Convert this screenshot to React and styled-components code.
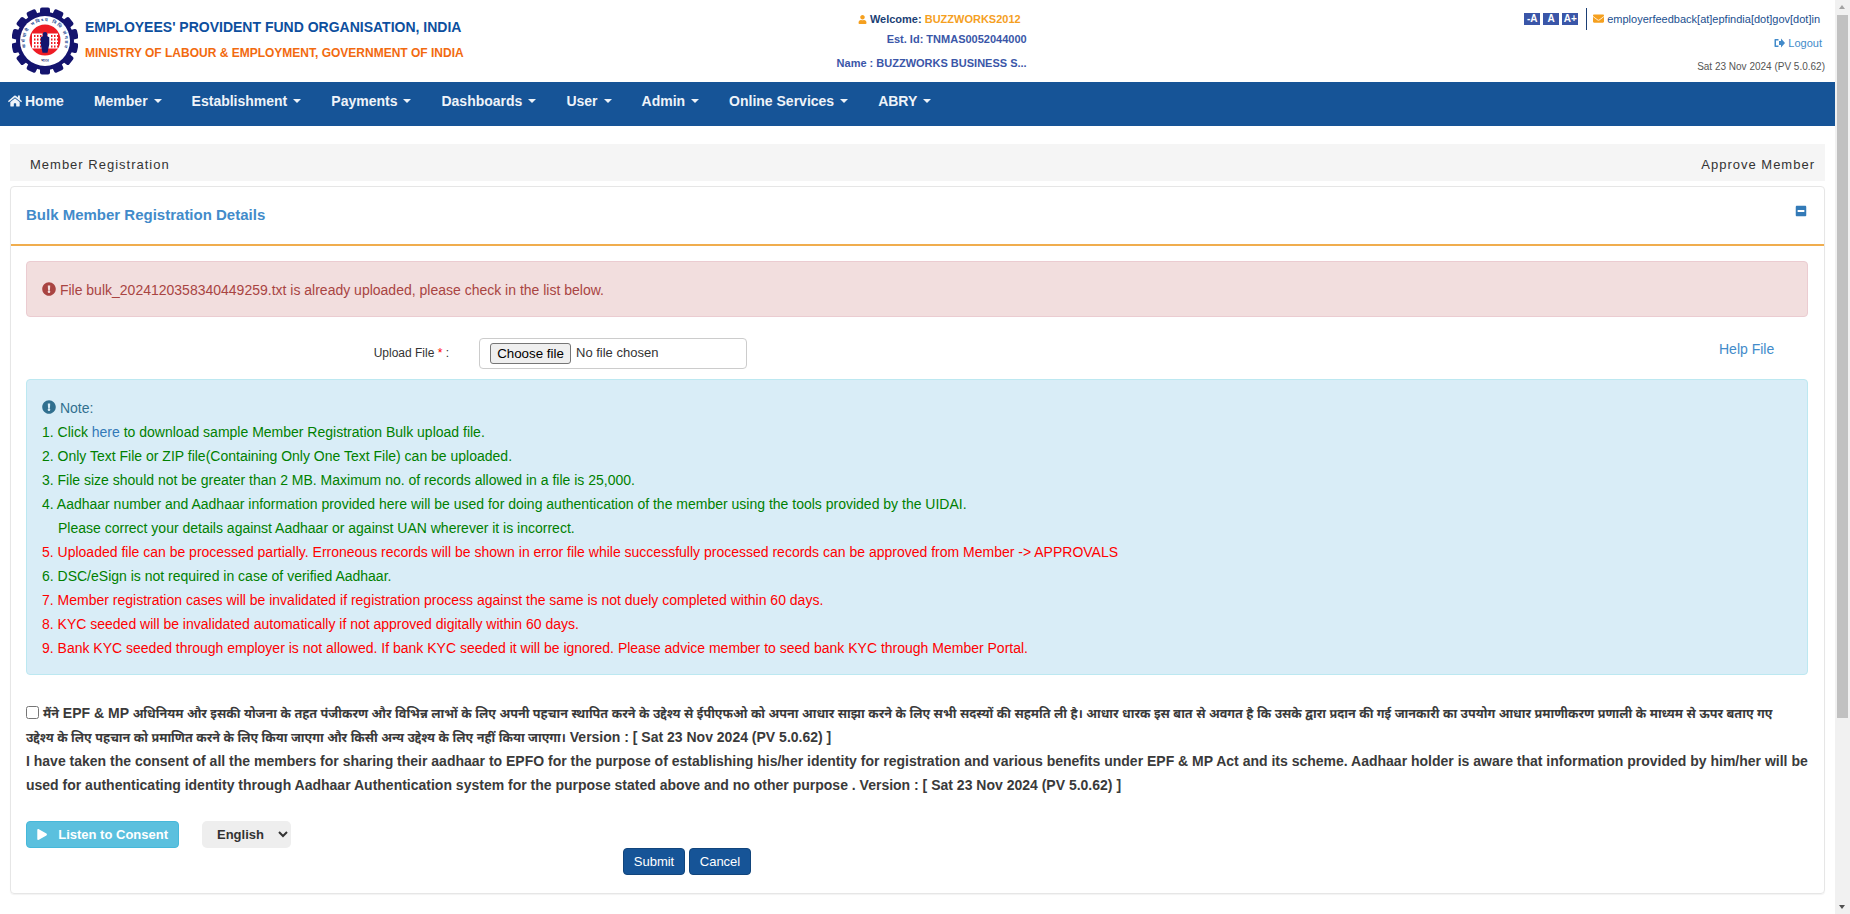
import React from 'react'
import styled, { createGlobalStyle } from 'styled-components'
import { FaHome, FaUser, FaEnvelope, FaExclamationCircle, FaMinusSquare, FaPlay } from 'react-icons/fa'

const GlobalStyle = createGlobalStyle`
  body {
    margin: 0;
    background: #fff;
    color: #333;
    font-family: "Liberation Sans", Arial, "Noto Sans Devanagari", "Noto Sans", sans-serif;
    font-size: 14px;
    line-height: 24px;
  }
  * { box-sizing: border-box; }
`

const Page = styled.div`
  min-height: 1149px;
  padding-right: 15px;
`

const ScrollTrack = styled.div`
  position: fixed;
  top: 0;
  right: 0;
  width: 15px;
  height: 914px;
  background: #f1f1f1;
`

const ScrollThumb = styled.div`
  position: absolute;
  top: 15px;
  left: 2px;
  width: 11px;
  height: 703px;
  background: #c1c1c1;
`

const ScrollArrow = styled.span`
  position: absolute;
  left: 4px;
  ${({ $down }) => ($down ? 'bottom: 5px;' : 'top: 5px;')}
  border-left: 3.5px solid transparent;
  border-right: 3.5px solid transparent;
  ${({ $down }) => ($down ? 'border-top: 4px solid #505050;' : 'border-bottom: 4px solid #a3a3a3;')}
`

const TopBar = styled.header`
  height: 82px;
  display: grid;
  grid-template-columns: 1fr 1fr 1fr;
`

const Brand = styled.div`
  display: flex;
  align-items: center;
  padding-left: 12px;
  gap: 7px;
`

const BrandText = styled.div`
  display: flex;
  flex-direction: column;
  gap: 7px;
  margin-top: -1px;
`

const OrgName = styled.div`
  color: #0d4f9e;
  font-size: 14px;
  font-weight: bold;
  line-height: 19px;
`

const Ministry = styled.div`
  color: #f26a0f;
  font-size: 12px;
  font-weight: bold;
  line-height: 19px;
`

const Welcome = styled.div`
  display: flex;
  flex-direction: column;
  align-items: flex-end;
  padding-top: 9px;
  font-size: 11px;
  font-weight: bold;
  margin-left: -125px;
  width: 540px;
`

const WelcomeLine = styled.div`
  line-height: 20px;
  color: #1b3f75;
  padding-right: 6px;
  svg { color: #f5a01f; margin-right: 3px; vertical-align: -1px; }
  span { color: #f5a01f; }
`

const InfoLine = styled.div`
  line-height: 20px;
  color: #3a56a8;
  margin-bottom: ${({ $gap }) => $gap || 0}px;
`

const Utility = styled.div`
  display: flex;
  flex-direction: column;
  align-items: flex-end;
  padding: 8px 10px 0 0;
`

const UtilityTop = styled.div`
  display: flex;
  align-items: center;
  height: 22px;
  padding-right: 5px;
`

const SizeButton = styled.span`
  width: 16px;
  height: 12px;
  margin-left: 3px;
  background: #3a56a8;
  color: #fff;
  font-size: 10px;
  font-weight: bold;
  line-height: 12px;
  text-align: center;
`

const Divider = styled.span`
  width: 1px;
  height: 22px;
  margin: 0 6px 0 8px;
  background: #1b3f75;
`

const Feedback = styled.span`
  color: #1b4f8f;
  font-size: 11px;
  svg { color: #f5a01f; margin-right: 3px; vertical-align: -1px; }
`

const Logout = styled.a`
  margin: 1px 3px 0 0;
  color: #428bca;
  font-size: 11px;
  line-height: 24px;
  display: flex;
  align-items: center;
  gap: 3px;
`

const DateText = styled.div`
  margin-top: 2px;
  color: #555;
  font-size: 10px;
  line-height: 20px;
`

const Nav = styled.nav`
  height: 44px;
  display: flex;
  background: #165497;
`

const NavItem = styled.a`
  display: flex;
  align-items: center;
  height: 38px;
  padding: 0 15px;
  color: #eef3f9;
  font-size: 14px;
  font-weight: bold;
  &:first-child { padding-left: 8px; }
  svg { margin-right: 3px; }
`

const Caret = styled.span`
  display: inline-block;
  margin-left: 6px;
  border-top: 4px solid #eef3f9;
  border-left: 4px solid transparent;
  border-right: 4px solid transparent;
`

const Content = styled.main`
  padding: 18px 10px 0;
`

const Breadcrumb = styled.div`
  height: 37px;
  display: flex;
  justify-content: space-between;
  align-items: center;
  padding: 4px 10px 0 20px;
  background: #f5f5f5;
  color: #333;
  font-size: 13px;
  letter-spacing: 1px;
`

const Panel = styled.section`
  margin-top: 5px;
  height: 708px;
  border: 1px solid #e6e6e6;
  border-radius: 4px;
  box-shadow: 0 1px 1px rgba(0, 0, 0, 0.05);
`

const PanelHead = styled.div`
  height: 59px;
  display: flex;
  justify-content: space-between;
  padding: 16px 17px 0 15px;
  border-bottom: 2px solid #f0ad4e;
`

const PanelTitle = styled.h3`
  margin: 0;
  color: #428bca;
  font-size: 15px;
  font-weight: bold;
  line-height: 24px;
`

const Collapse = styled.span`
  color: #337ab7;
  line-height: 1;
  margin-top: 2px;
`

const PanelBody = styled.div`
  padding: 15px 16px 0 15px;
`

const Alert = styled.div`
  height: 56px;
  padding: 16px 15px 14px;
  border: 1px solid #ebccd1;
  border-radius: 4px;
  background: #f2dede;
  color: #a94442;
  svg { vertical-align: -1px; }
`

const UploadRow = styled.div`
  display: flex;
  align-items: center;
  height: 30px;
  margin: 21px 0 11px;
`

const UploadLabel = styled.label`
  width: 423px;
  font-size: 12px;
  text-align: right;
  span { color: red; }
`

const FileBox = styled.div`
  display: flex;
  align-items: center;
  gap: 5px;
  width: 268px;
  height: 31px;
  margin-left: 30px;
  padding: 0 10px;
  border: 1px solid #ccc;
  border-radius: 4px;
  font-size: 13px;
  color: #333;
`

const FileButton = styled.button`
  width: 81px;
  height: 21px;
  padding: 0;
  border: 1px solid #767676;
  border-radius: 3px;
  background: #efefef;
  color: #000;
  font: 13.33px "Liberation Sans", sans-serif;
`

const HelpLink = styled.a`
  margin-left: 972px;
  margin-top: -8px;
  color: #428bca;
  font-size: 14px;
`

const Note = styled.div`
  padding: 16px 15px 14px;
  border: 1px solid #bce8f1;
  border-radius: 4px;
  background: #d9edf7;
  color: #31708f;
  svg { vertical-align: -1px; }
`

const NoteLine = styled.div`
  color: ${({ $warn }) => ($warn ? 'red' : 'green')};
  padding-left: ${({ $indent }) => ($indent ? '16px' : '0')};
  a { color: #337ab7; text-decoration: none; }
`

const Consent = styled.div`
  margin-top: 26px;
  font-weight: bold;
  color: #3a3a3a;
  input { margin: 0 4px 0 0; vertical-align: -1px; }
`

const Hindi = styled.span`
  font-size: 12.6px;
  line-height: 16px;
`

const ActionRow = styled.div`
  display: flex;
  align-items: center;
  gap: 23px;
  margin-top: 24px;
`

const ListenButton = styled.button`
  width: 153px;
  height: 27px;
  display: flex;
  align-items: center;
  gap: 11px;
  padding: 0 10px;
  border: 1px solid #46b8da;
  border-radius: 4px;
  background: #5bc0de;
  color: #fff;
  white-space: nowrap;
  font: bold 13px "Liberation Sans", sans-serif;
`

const LangSelect = styled.select`
  width: 89px;
  height: 27px;
  padding-left: 11px;
  border: 0;
  border-radius: 5px;
  background: #eee;
  color: #333;
  font: bold 13px "Liberation Sans", sans-serif;
`

const SubmitRow = styled.div`
  display: flex;
  gap: 4px;
  padding-left: 597px;
`

const FormButton = styled.button`
  width: 62px;
  height: 27px;
  padding: 0;
  border: 1px solid #12457c;
  border-radius: 4px;
  background: #165497;
  color: #fff;
  font: 13px "Liberation Sans", sans-serif;
`

const LogoutIcon = () => (
  <svg width="11" height="10" viewBox="0 0 22 20" fill="currentColor">
    <path d="M2 2h7v3H4v10h5v3H2a2 2 0 0 1-1-1V3a2 2 0 0 1 1-1z" />
    <path d="M10 6h4V1l8 9-8 9v-5h-4z" />
  </svg>
)

const Logo = () => {
  const teeth = Array.from({ length: 14 }, (_, i) => (i * 360) / 14)
  const windows = [44, 50, 56, 78, 84, 90]
  const floors = [56, 63, 70, 77]
  return (
    <svg width="66" height="68" viewBox="0 0 132 136">
      <defs>
        <path id="ringTop" d="M29 84a40 40 0 1 1 74 0" />
      </defs>
      <g fill="#14146e">
        {teeth.map((a) => (
          <rect key={a} x="56" y="1" width="20" height="18" rx="4" transform={`rotate(${a} 66 68)`} />
        ))}
        <circle cx="66" cy="68" r="58" />
      </g>
      <circle cx="66" cy="68" r="50" fill="#fff" />
      <text fill="#2a4f98" fontSize="9" fontWeight="bold" fontFamily="Noto Sans, sans-serif">
        <textPath href="#ringTop" startOffset="50%" textAnchor="middle" textLength="150">कर्मचारी भविष्य निधि संगठन</textPath>
      </text>
      <circle cx="66" cy="66" r="31" fill="#ee1c25" />
      <g fill="#fff">
        <rect x="40" y="53" width="21" height="30" />
        <rect x="71" y="53" width="21" height="30" />
      </g>
      <g fill="#ee1c25">
        {windows.flatMap((x) => floors.map((y) => <rect key={`${x}-${y}`} x={x} y={y} width="3" height="4" />))}
      </g>
      <path d="M66 50a4.500 4.500 0 0 1 4.500 4.500c0 2-1 3.500-1 3.500l5 2.500v14l-3.500 17h-10l-3.500-17v-14l5-2.500s-1-1.500-1-3.500A4.500 4.500 0 0 1 66 50z" fill="#14146e" />
      <text x="66" y="110" fill="#14146e" fontSize="8" textAnchor="middle" fontFamily="Noto Sans, sans-serif">भारत</text>
    </svg>
  )
}

const menu = ['Member', 'Establishment', 'Payments', 'Dashboards', 'User', 'Admin', 'Online Services', 'ABRY']

const notes = [
  { text: <>1. Click <a href="#here">here</a> to download sample Member Registration Bulk upload file.</> },
  { text: '2. Only Text File or ZIP file(Containing Only One Text File) can be uploaded.' },
  { text: '3. File size should not be greater than 2 MB. Maximum no. of records allowed in a file is 25,000.' },
  { text: '4. Aadhaar number and Aadhaar information provided here will be used for doing authentication of the member using the tools provided by the UIDAI.' },
  { text: 'Please correct your details against Aadhaar or against UAN wherever it is incorrect.', indent: true },
  { text: '5. Uploaded file can be processed partially. Erroneous records will be shown in error file while successfully processed records can be approved from Member -> APPROVALS', warn: true },
  { text: '6. DSC/eSign is not required in case of verified Aadhaar.' },
  { text: '7. Member registration cases will be invalidated if registration process against the same is not duely completed within 60 days.', warn: true },
  { text: '8. KYC seeded will be invalidated automatically if not approved digitally within 60 days.', warn: true },
  { text: '9. Bank KYC seeded through employer is not allowed. If bank KYC seeded it will be ignored. Please advice member to seed bank KYC through Member Portal.', warn: true },
]

const App = () => {
  return (
    <Page>
      <GlobalStyle />
      <TopBar>
        <Brand>
          <Logo />
          <BrandText>
            <OrgName>EMPLOYEES' PROVIDENT FUND ORGANISATION, INDIA</OrgName>
            <Ministry>MINISTRY OF LABOUR &amp; EMPLOYMENT, GOVERNMENT OF INDIA</Ministry>
          </BrandText>
        </Brand>
        <Welcome>
          <WelcomeLine><FaUser size={9} />Welcome: <span>BUZZWORKS2012</span></WelcomeLine>
          <InfoLine $gap={4}>Est. Id: TNMAS0052044000</InfoLine>
          <InfoLine>Name : BUZZWORKS BUSINESS S...</InfoLine>
        </Welcome>
        <Utility>
          <UtilityTop>
            <SizeButton>-A</SizeButton>
            <SizeButton>A</SizeButton>
            <SizeButton>A+</SizeButton>
            <Divider />
            <Feedback><FaEnvelope size={11} />employerfeedback[at]epfindia[dot]gov[dot]in</Feedback>
          </UtilityTop>
          <Logout><LogoutIcon /> Logout</Logout>
          <DateText>Sat 23 Nov 2024 (PV 5.0.62)</DateText>
        </Utility>
      </TopBar>
      <Nav>
        <NavItem><FaHome size={14} />Home</NavItem>
        {menu.map((item) => (
          <NavItem key={item}>{item}<Caret /></NavItem>
        ))}
      </Nav>
      <Content>
        <Breadcrumb>
          <span>Member Registration</span>
          <span>Approve Member</span>
        </Breadcrumb>
        <Panel>
          <PanelHead>
            <PanelTitle>Bulk Member Registration Details</PanelTitle>
            <Collapse><FaMinusSquare size={12} /></Collapse>
          </PanelHead>
          <PanelBody>
            <Alert><FaExclamationCircle size={14} /> File bulk_2024120358340449259.txt is already uploaded, please check in the list below.</Alert>
            <UploadRow>
              <UploadLabel>Upload File <span>*</span> :</UploadLabel>
              <FileBox><FileButton>Choose file</FileButton>No file chosen</FileBox>
              <HelpLink>Help File</HelpLink>
            </UploadRow>
            <Note>
              <div><FaExclamationCircle size={14} /> Note:</div>
              {notes.map((n, i) => (
                <NoteLine key={i} $warn={n.warn} $indent={n.indent}>{n.text}</NoteLine>
              ))}
            </Note>
            <Consent>
              <input type="checkbox" />
              <Hindi>मैंने</Hindi> EPF &amp; MP <Hindi>अधिनियम और इसकी योजना के तहत पंजीकरण और विभिन्न लाभों के लिए अपनी पहचान स्थापित करने के उद्देश्य से ईपीएफओ को अपना आधार साझा करने के लिए सभी सदस्यों की सहमति ली है। आधार धारक इस बात से अवगत है कि उसके द्वारा प्रदान की गई जानकारी का उपयोग आधार प्रमाणीकरण प्रणाली के माध्यम से ऊपर बताए गए<br />उद्देश्य के लिए पहचान को प्रमाणित करने के लिए किया जाएगा और किसी अन्य उद्देश्य के लिए नहीं किया जाएगा।</Hindi> Version : [ Sat 23 Nov 2024 (PV 5.0.62) ]
              <br />
              I have taken the consent of all the members for sharing their aadhaar to EPFO for the purpose of establishing his/her identity for registration and various benefits under EPF &amp; MP Act and its scheme. Aadhaar holder is aware that information provided by him/her will be used for authenticating identity through Aadhaar Authentication system for the purpose stated above and no other purpose . Version : [ Sat 23 Nov 2024 (PV 5.0.62) ]
            </Consent>
            <ActionRow>
              <ListenButton><FaPlay size={11} /> Listen to Consent</ListenButton>
              <LangSelect defaultValue="English">
                <option>English</option>
                <option>Hindi</option>
              </LangSelect>
            </ActionRow>
            <SubmitRow>
              <FormButton>Submit</FormButton>
              <FormButton>Cancel</FormButton>
            </SubmitRow>
          </PanelBody>
        </Panel>
      </Content>
      <ScrollTrack>
        <ScrollArrow />
        <ScrollThumb />
        <ScrollArrow $down />
      </ScrollTrack>
    </Page>
  )
}

export default App
